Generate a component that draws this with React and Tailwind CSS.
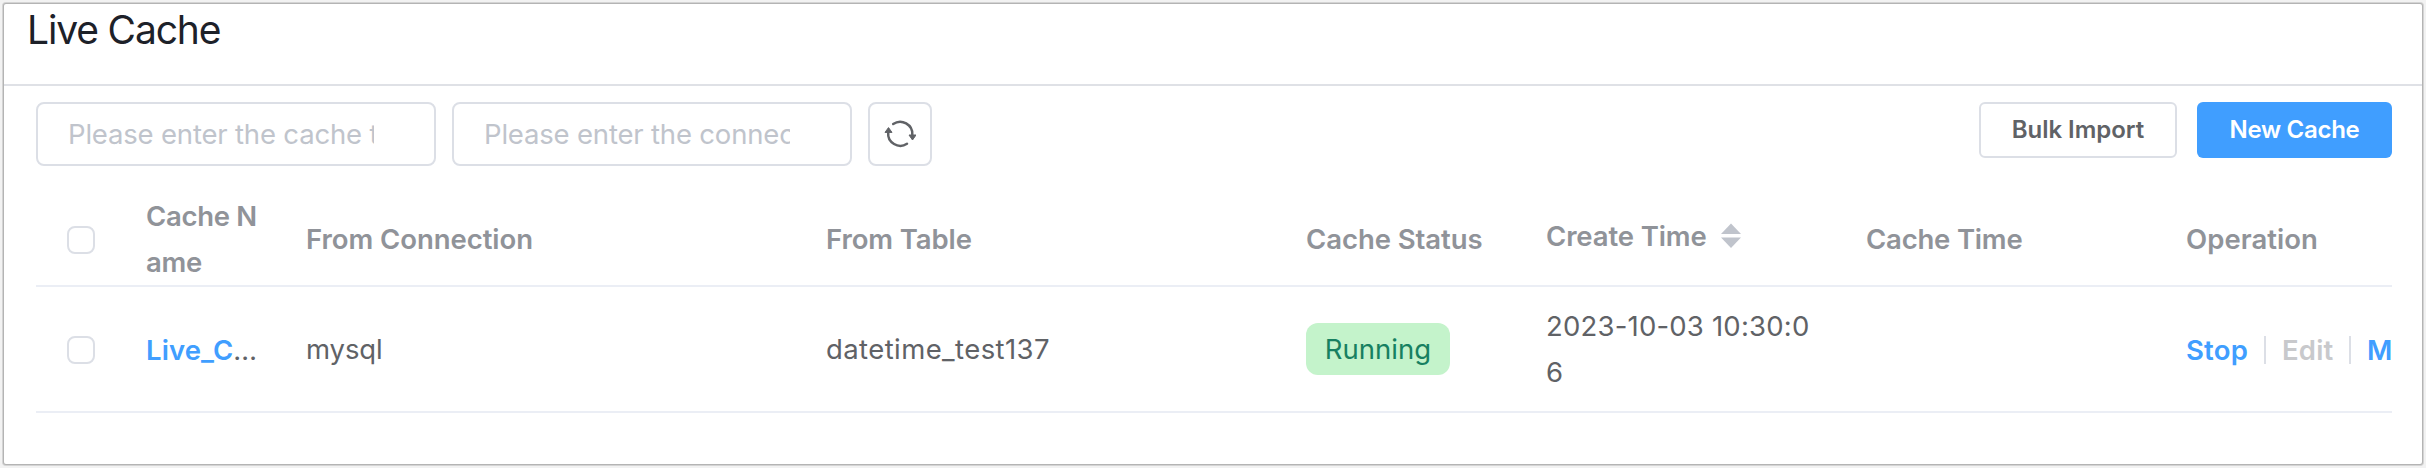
function RefreshIcon() {
  return (
    <svg width="32" height="32" viewBox="0 0 32 32" fill="none">
      <path d="M9.2 6A12.2 12.2 0 0 1 28.3 16.8" stroke="#606266" strokeWidth="2.5" strokeLinecap="round" />
      <path d="M23 25.8A12.2 12.2 0 0 1 4.2 14.4" stroke="#606266" strokeWidth="2.5" strokeLinecap="round" />
      <path d="M25 17H32L28.5 22Z" fill="#606266" stroke="#606266" strokeWidth="1" strokeLinejoin="round" />
      <path d="M1 14.4H8L4.5 9.6Z" fill="#606266" stroke="#606266" strokeWidth="1" strokeLinejoin="round" />
    </svg>
  );
}

function SortIcon() {
  return (
    <svg width="20" height="28" viewBox="0 0 20 28" fill="#c0c4cc">
      <path d="M0 12L10 1.6L20 12Z" />
      <path d="M0 15.6L10 26L20 15.6Z" />
    </svg>
  );
}

function SearchField({ placeholder }) {
  return (
    <div className="flex h-16 w-[400px] items-center rounded-lg border-2 border-[#dcdfe6] pl-[30px] pr-[60px]">
      <span className="w-[306px] overflow-hidden whitespace-nowrap leading-[46px] tracking-[-0.18px] text-[#c0c4cc]">{placeholder}</span>
    </div>
  );
}

function Checkbox() {
  return <span className="block h-7 w-7 rounded-lg border-2 border-[#dcdfe6] bg-white" />;
}

const COLUMNS = 'grid grid-cols-[90px_160px_520px_480px_240px_320px_320px_226px] items-center border-b-2 border-[#ebeef5]';

export default function App() {
  return (
    <div className="h-[468px] w-[2426px] overflow-hidden bg-[#f2f2f2] p-1 font-['Inter',sans-serif] text-[27.5px]">
      <div className="h-[460px] w-[2418px] rounded-[2px] bg-white shadow-[0_0_0_1px_#b4b4b4,0_0_0_2px_#d4d4d4]">
        <header className="h-[82px] border-b-2 border-[#dfe1e6] pl-[23px]">
          <h1 className="text-[39px] leading-[51px] tracking-[-1.15px] text-[#1d2129]">Live Cache</h1>
        </header>

        <main className="pl-8 pr-[30px] pt-4">
          <div className="flex items-start gap-4">
            <SearchField placeholder="Please enter the cache task name" />
            <SearchField placeholder="Please enter the connection name" />
            <button className="flex h-16 w-16 items-center justify-center rounded-lg border-2 border-[#dcdfe6]">
              <RefreshIcon />
            </button>
            <div className="ml-auto flex gap-5 text-2xl font-semibold">
              <button className="h-14 w-[198px] rounded-md border-2 border-[#dcdfe6] tracking-[-0.04px] text-[#606266]">Bulk Import</button>
              <button className="h-14 w-[195px] rounded-md bg-[#409eff] tracking-[-0.28px] text-white">New Cache</button>
            </div>
          </div>

          <div className="mt-[27px] leading-[46px]">
            <div className={`${COLUMNS} h-[94px] font-semibold text-[#909399]`}>
              <div className="pl-[31px] pt-0.5"><Checkbox /></div>
              <div className="pl-5 tracking-[-0.3px]">Cache N<br />ame</div>
              <div className="pl-5 tracking-[-0.05px]">From Connection</div>
              <div className="pl-5 tracking-[-0.1px]">From Table</div>
              <div className="pl-5 tracking-[-0.06px]">Cache Status</div>
              <div className="flex items-center gap-[14px] pb-1.5 pl-5 tracking-[-0.12px]">
                Create Time
                <SortIcon />
              </div>
              <div className="pl-5 tracking-[-0.2px]">Cache Time</div>
              <div className="pl-5 tracking-[0.05px]">Operation</div>
            </div>

            <div className={`${COLUMNS} h-[126px] text-[#606266]`}>
              <div className="pl-[31px] pt-0.5"><Checkbox /></div>
              <div className="whitespace-nowrap pl-5 pt-0.5">
                <a className="font-semibold tracking-[0.1px] text-[#409eff]">Live_C</a><span className="tracking-[-0.8px]">…</span>
              </div>
              <div className="pl-5 tracking-[-0.1px]">mysql</div>
              <div className="pl-5 tracking-[0.41px]">datetime_test137</div>
              <div className="pl-5">
                <span className="flex h-[52px] w-36 items-center justify-center rounded-xl bg-[#c4f3cb] tracking-[0.05px] text-[#178061]">Running</span>
              </div>
              <div className="pl-5 tracking-[0.2px]">2023-10-03 10:30:0<br />6</div>
              <div />
              <div className="flex items-center overflow-hidden whitespace-nowrap pl-5 pt-0.5 font-semibold text-[#409eff]">
                <span className="w-[62px] tracking-[0.2px]">Stop</span>
                <span className="ml-4 h-7 w-0.5 shrink-0 bg-[#dcdfe6]" />
                <span className="ml-4 w-[51px] tracking-[0.2px] text-[#c8c9cc]">Edit</span>
                <span className="ml-4 h-7 w-0.5 shrink-0 bg-[#dcdfe6]" />
                <span className="ml-4">M</span>
              </div>
            </div>
          </div>
        </main>
      </div>
    </div>
  );
}
